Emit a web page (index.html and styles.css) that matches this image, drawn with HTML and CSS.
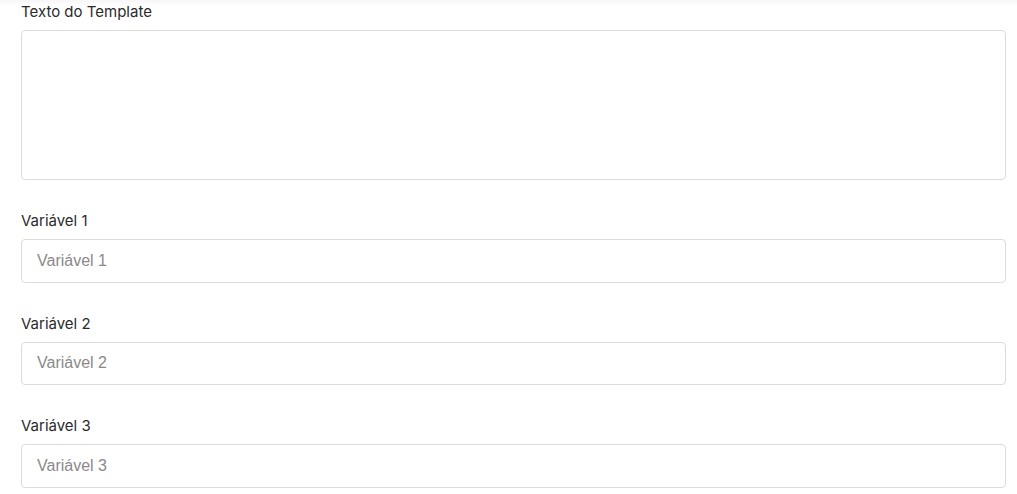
FILE: index.html
```html
<!DOCTYPE html>
<html lang="pt">
<head>
<meta charset="utf-8">
<link rel="stylesheet" href="styles.css">
</head>
<body>
<div class="topshade"></div>
<form class="form">
  <div class="field">
    <label class="label">Texto do Template</label>
    <textarea class="control area"></textarea>
  </div>
  <div class="field">
    <label class="label">Variável 1</label>
    <input class="control" type="text" placeholder="Variável 1">
  </div>
  <div class="field">
    <label class="label">Variável 2</label>
    <input class="control" type="text" placeholder="Variável 2">
  </div>
  <div class="field">
    <label class="label">Variável 3</label>
    <input class="control" type="text" placeholder="Variável 3">
  </div>
</form>
</body>
</html>
```
FILE: styles.css
```css
html, body {
  margin: 0;
  padding: 0;
  background: #ffffff;
}
body {
  position: relative;
  font-family: Inter, "Noto Sans", sans-serif;
}
.topshade {
  position: absolute;
  left: 0;
  right: 0;
  top: 0;
  height: 6px;
  background: linear-gradient(to bottom, rgba(0,0,0,0.035), rgba(0,0,0,0));
  pointer-events: none;
}
.form {
  display: flex;
  flex-direction: column;
  gap: 31px;
  padding: 2px 11px 0 21px;
}
.field {
  display: flex;
  flex-direction: column;
  gap: 8px;
}
.label {
  font-size: 15px;
  line-height: 20px;
  color: #2b2b2b;
}
.control {
  box-sizing: border-box;
  width: 100%;
  height: 43.5px;
  margin: 0;
  border: 1px solid #dcdcdc;
  border-radius: 4px;
  padding: 0 15px;
  font-family: "Liberation Sans", Arial, sans-serif;
  font-size: 16px;
  color: #333;
  background: #fff;
  outline: none;
}
.control::placeholder {
  color: #8a8a8a;
}
.area {
  height: 150px;
  resize: none;
  padding: 10px 15px;
}
```
